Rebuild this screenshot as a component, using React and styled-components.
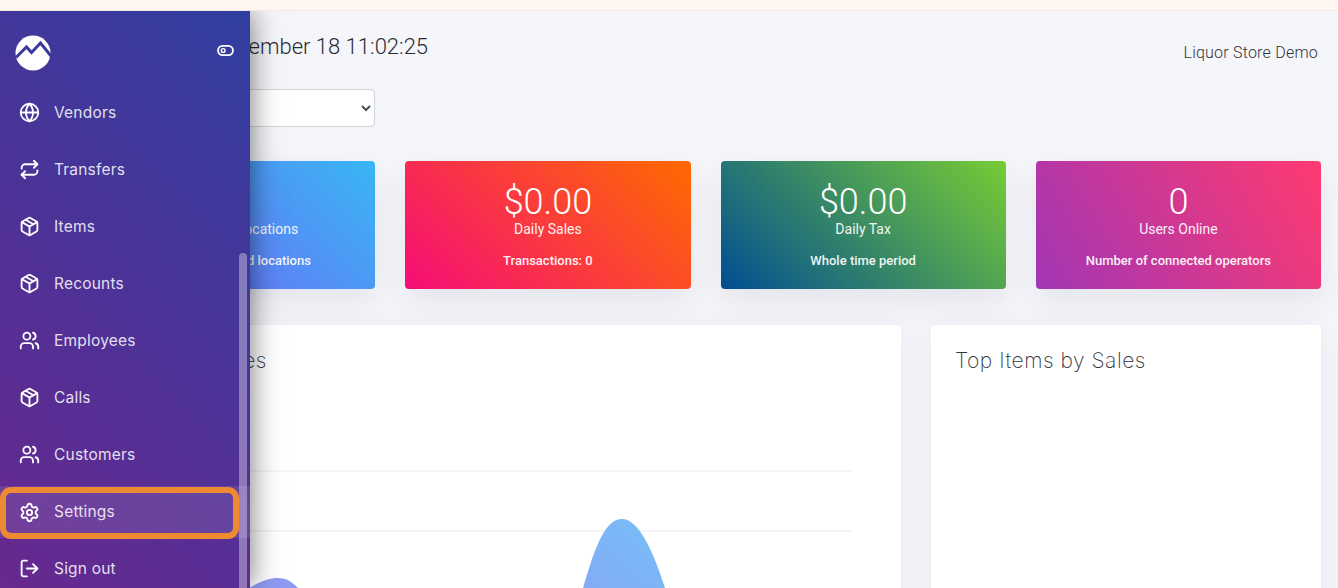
import React from 'react';
import styled, { createGlobalStyle } from 'styled-components';
import { Globe, Repeat, Package, Users, Settings, LogOut } from 'lucide-react';

const Global = createGlobalStyle`
  html, body { margin: 0; padding: 0; height: 100%; overflow: hidden; background: #f5f6fa; }
  * { box-sizing: border-box; }
`;
const Page = styled.div`
  position: relative; width: 1338px; height: 588px; overflow: hidden;
  background: #f5f6fa; font-family: Roboto, "Liberation Sans", sans-serif; color: #2b2b33;
`;
const TopBar = styled.div`position: relative; z-index: 2; height: 11px; background: #fff6f1; border-bottom: 1px solid #f0e9e5;`;
const Main = styled.main`padding: 0 17px 0 90px; display: flex; flex-direction: column;`;
const Header = styled.header`display: flex; justify-content: space-between; height: 78px; padding-top: 22px;`;
const DateTitle = styled.h1`margin: 0; font: 300 22px/28px Roboto, sans-serif; color: #2b2b33;`;
const Store = styled.span`font: 300 16px/20px Roboto, sans-serif; letter-spacing: .22px; margin: 10px 3px 0 0; color: #33333b;`;
const StoreSelect = styled.select`
  display: block; width: 285px; height: 38px; border: 1px solid #ced4da; border-radius: 4px;
  background: #fff; padding: 0 6px; font: 400 14px Roboto, sans-serif; color: #495057;
`;
const Cards = styled.section`display: grid; grid-template-columns: repeat(4, 1fr); gap: 30px; margin-top: 34px;`;
const Card = styled.div`
  height: 128px; border-radius: 4px; background: ${p => p.$bg}; color: #fff; text-align: center;
  padding-top: 23px; box-shadow: 0 12px 30px rgba(40, 50, 90, .09);
`;
const Value = styled.div`font: 300 36px/36px Roboto, sans-serif;`;
const Label = styled.div`font: 400 14px/18px Roboto, sans-serif; opacity: .92;`;
const Note = styled.div`font: 500 13px/16px Roboto, sans-serif; margin-top: 15px; opacity: .92;`;
const Panels = styled.section`display: grid; grid-template-columns: 811px 390px; gap: 30px; margin-top: 36px;`;
const Panel = styled.div`
  height: 320px; background: #fff; border-radius: 4px; padding: 23px 24px;
  box-shadow: 0 6px 30px rgba(40, 50, 90, .07);
`;
const PanelTitle = styled.h2`margin: 0; font: 200 21px/25px Inter, sans-serif; color: #33333b; letter-spacing: .52px;`;
const Chart = styled.svg`display: block; width: 763px; height: 215px;`;
const Sidebar = styled.aside`
  position: absolute; left: 0; top: 11px; bottom: 0; width: 250px;
  background: linear-gradient(45deg, #68288f 0%, #4d3297 50%, #303f9f 100%);
  box-shadow: 0 0 28px rgba(0, 0, 0, .55);
`;
const Brand = styled.div`display: flex; align-items: center; justify-content: space-between; height: 74px; padding: 9px 16px 0 15px;`;
const EyeMark = styled.svg`margin-top: -4px;`;
const Nav = styled.nav`display: flex; flex-direction: column; margin-top: -1px;`;
const Item = styled.a`
  position: relative; height: 57px; display: flex; align-items: center; gap: 14.5px; padding-left: 18.5px;
  font: 400 15.5px/20px Inter, sans-serif; color: rgba(255,255,255,.86); letter-spacing: .2px;
  svg { color: #fff; flex: none; }
  ${p => p.$active && `
    background: rgba(255,255,255,.1);
    height: 52px; margin: 3px 0 2px;
    &::after { content: ''; position: absolute; left: 0; right: 11px; top: 1px; bottom: -1px;
      border: 6.5px solid #ee8a31; border-radius: 11px; }
  `}
`;
const Scroll = styled.div`
  position: absolute; right: 3px; top: 242px; bottom: 0; width: 8px;
  border-radius: 4px 4px 0 0; background: rgba(255,255,255,.35);
`;
const items = [
  ['Vendors', Globe], ['Transfers', Repeat], ['Items', Package], ['Recounts', Package],
  ['Employees', Users], ['Calls', Package], ['Customers', Users], ['Settings', Settings], ['Sign out', LogOut],
];
const Logo = () => (
  <svg width="36" height="36" viewBox="0 0 36 36">
    <circle cx="18" cy="18" r="17.5" fill="#fff" />
    <path d="M1 22.5 L11.5 12 L16.5 17.5 L25.5 8 L36 21" fill="none" stroke="#3b3a9c" strokeWidth="3" />
  </svg>
);
const Eye = () => (
  <EyeMark width="17" height="13" viewBox="0 0 18 14" fill="none">
    <rect x="1" y="2" width="16" height="10" rx="5" stroke="#fff" strokeWidth="2" />
    <circle cx="6.5" cy="7" r="2" stroke="#fff" strokeWidth="1.5" />
  </EyeMark>
);
export default function App() {
  return (
    <Page>
      <Global />
      <TopBar />
      <Main>
        <Header>
          <DateTitle>Wednesday, November 18 11:02:25</DateTitle>
          <Store>Liquor Store Demo</Store>
        </Header>
        <StoreSelect aria-label="Location"><option></option></StoreSelect>
        <Cards>
          <Card $bg="linear-gradient(45deg,#7a5cf5,#38b6f5)"><Value>1</Value><Label>Number of Locations</Label><Note>Number of linked locations</Note></Card>
          <Card $bg="linear-gradient(45deg,#f50d78,#ff6a00)"><Value>$0.00</Value><Label>Daily Sales</Label><Note>Transactions: 0</Note></Card>
          <Card $bg="linear-gradient(45deg,#004e92,#78cc34)"><Value>$0.00</Value><Label>Daily Tax</Label><Note>Whole time period</Note></Card>
          <Card $bg="linear-gradient(60deg,#a136b5,#ff3a70)"><Value>0</Value><Label>Users Online</Label><Note>Number of connected operators</Note></Card>
        </Cards>
        <Panels>
          <Panel>
            <PanelTitle>Category Sales</PanelTitle>
            <Chart viewBox="0 0 763 215">
              <defs>
                <linearGradient id="area" gradientUnits="userSpaceOnUse" x1="560" y1="130" x2="420" y2="300">
                  <stop offset="0" stopColor="#74c2f8" />
                  <stop offset="1" stopColor="#8f9af2" />
                </linearGradient>
              </defs>
              <line x1="0" x2="738" y1="98" y2="98" stroke="#f0f0f3" strokeWidth="1.5" />
              <line x1="0" x2="738" y1="158" y2="158" stroke="#f0f0f3" strokeWidth="1.5" />
              <path d="M135 215 C147 208 155 205 164 205 C173 205 178 209 184 215 Z" fill="#8f9af2" />
              <path d="M469 215 C482 170 492 146 508 146 C524 146 538 175 551 215 Z" fill="url(#area)" />
            </Chart>
          </Panel>
          <Panel><PanelTitle>Top Items by Sales</PanelTitle></Panel>
        </Panels>
      </Main>
      <Sidebar>
        <Brand><Logo /><Eye /></Brand>
        <Nav>
          {items.map(([label, Icon]) => (
            <Item key={label} $active={label === 'Settings'}>
              <Icon size={21} strokeWidth={2.1} />{label}
            </Item>
          ))}
        </Nav>
        <Scroll />
      </Sidebar>
    </Page>
  );
}
